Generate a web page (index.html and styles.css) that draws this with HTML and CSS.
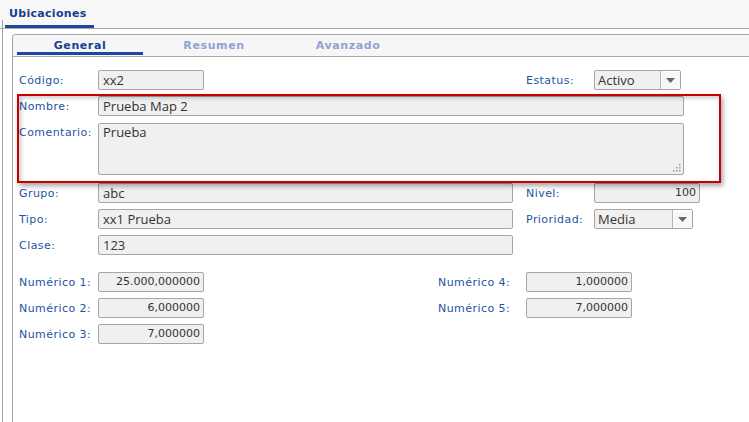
FILE: index.html
```html
<!DOCTYPE html>
<html lang="es">
<head>
<meta charset="utf-8">
<title>Ubicaciones</title>
<link rel="stylesheet" href="styles.css">
</head>
<body>
<div class="header">
  <div class="main-tab">Ubicaciones</div>
</div>
<div class="outer">
  <div class="panel">
    <div class="tabs">
      <div class="tab active">General</div>
      <div class="tab">Resumen</div>
      <div class="tab">Avanzado</div>
    </div>
    <div class="form">
      <div class="grid">
        <div class="lbl">Código:</div>
        <div class="fld w-short">xx2</div>
        <div class="lbl lbl2">Estatus:</div>
        <div class="sel w-estatus"><span class="sel-text">Activo</span><span class="sel-btn"><svg width="9" height="5" viewBox="0 0 9 5"><path d="M0 0H9L4.5 5Z" fill="#666"/></svg></span></div>

        <div class="lbl">Nombre:</div>
        <div class="fld span-wide">Prueba Map 2</div>

        <div class="lbl lbl-top">Comentario:</div>
        <div class="fld area span-wide">Prueba<svg class="grip" width="9" height="9" viewBox="0 0 9 9"><g fill="#9a9a9a"><rect x="7" y="1" width="1.5" height="1.5"/><rect x="4" y="4" width="1.5" height="1.5"/><rect x="7" y="4" width="1.5" height="1.5"/><rect x="1" y="7" width="1.5" height="1.5"/><rect x="4" y="7" width="1.5" height="1.5"/><rect x="7" y="7" width="1.5" height="1.5"/></g></svg></div>

        <div class="lbl">Grupo:</div>
        <div class="fld">abc</div>
        <div class="lbl lbl2">Nivel:</div>
        <div class="fld num w-short">100</div>

        <div class="lbl">Tipo:</div>
        <div class="fld">xx1 Prueba</div>
        <div class="lbl lbl2">Prioridad:</div>
        <div class="sel w-prio"><span class="sel-text">Media</span><span class="sel-btn"><svg width="9" height="5" viewBox="0 0 9 5"><path d="M0 0H9L4.5 5Z" fill="#666"/></svg></span></div>

        <div class="lbl">Clase:</div>
        <div class="fld">123</div>
      </div>

      <div class="numgrid">
        <div class="lbl">Numérico 1:</div>
        <div class="fld num">25.000,000000</div>
        <div class="spacer"></div>
        <div class="lbl">Numérico 4:</div>
        <div class="fld num">1,000000</div>

        <div class="lbl">Numérico 2:</div>
        <div class="fld num">6,000000</div>
        <div class="spacer"></div>
        <div class="lbl">Numérico 5:</div>
        <div class="fld num">7,000000</div>

        <div class="lbl">Numérico 3:</div>
        <div class="fld num">7,000000</div>
      </div>

      <div class="highlight"></div>
    </div>
  </div>
</div>
</body>
</html>
```

FILE: styles.css
```css
html, body {
  margin: 0;
  padding: 0;
  background: #ffffff;
  overflow: hidden;
  height: 100%;
}

body {
  font-family: "DejaVu Sans", Verdana, sans-serif;
  font-size: 11px;
  color: #333;
}

.header {
  height: 28px;
  border-bottom: 1px solid #a9a9a9;
  background: linear-gradient(#a4a4a4, #a4a4a4) 2px 20px / 1px 8px no-repeat, #f7f7f7;
  display: flex;
  align-items: flex-end;
}

.main-tab {
  margin-left: 5px;
  width: 85px;
  padding-left: 4px;
  padding-bottom: 5px;
  line-height: 13px;
  border-bottom: 3px solid #1b47a0;
  font-weight: bold;
  font-size: 11px;
  letter-spacing: 0.3px;
  color: #173f8f;
}

.outer {
  margin-left: 2px;
  border-left: 1px solid #a4a4a4;
  padding: 5px 0 0 9px;
  height: calc(100% - 34px);
}

.panel {
  height: 100%;
  border-left: 1px solid #a4a4a4;
  border-top: 1px solid #a4a4a4;
  border-top-left-radius: 4px;
}

.tabs {
  height: 21px;
  background: #f6f6f6;
  border-bottom: 1px solid #a9a9a9;
  display: flex;
  border-top-left-radius: 3px;
}

.tab {
  width: 134px;
  box-sizing: border-box;
  text-align: center;
  font-weight: bold;
  font-size: 11px;
  letter-spacing: 0.6px;
  color: #8ea3d3;
  line-height: 17px;
  padding-top: 2px;
}

.tab.active {
  color: #173f8f;
  margin: 0 4px 0 4px;
  width: 126px;
  height: 20px;
  border-bottom: 3px solid #1b47a0;
}

.form {
  position: relative;
  padding: 13px 0 0 6px;
}

.lbl {
  color: #2453a3;
  font-size: 11px;
  letter-spacing: 0.45px;
  white-space: nowrap;
  align-self: center;
}

.lbl-top {
  align-self: start;
  padding-top: 3px;
  margin-top: 1px;
}

.grid {
  display: grid;
  grid-template-columns: 79px 415px 81px 120px;
  grid-template-rows: 20px 20px 55px 20px 20px 20px;
  row-gap: 6px;
}

.grid .lbl2 {
  grid-column: 3;
  margin-left: 13px;
}

.fld {
  box-sizing: border-box;
  height: 20px;
  border: 1px solid #a6a6a6;
  border-radius: 2px;
  background: #f0f0f0;
  font-family: "Open Sans", "DejaVu Sans", sans-serif;
  font-size: 13px;
  line-height: 18px;
  color: #333;
  padding: 0 4px;
  white-space: nowrap;
  overflow: hidden;
}

.grid .fld {
  grid-column: 2;
}

.grid .fld.num.w-short {
  grid-column: 4;
}

.w-short {
  width: 106px;
}

.grid .span-wide {
  grid-column: 2 / span 3;
  width: 586px;
}

.area {
  height: 52px;
  position: relative;
  line-height: 16px;
  padding-top: 0;
  margin-top: 1px;
  align-self: start;
}

.grip {
  position: absolute;
  right: 2px;
  bottom: 2px;
}

.num {
  text-align: right;
  font-family: "DejaVu Sans", Verdana, sans-serif;
  font-size: 11px;
  padding: 0 3px;
}

.sel {
  grid-column: 4;
  box-sizing: border-box;
  height: 20px;
  border: 1px solid #a6a6a6;
  border-radius: 2px;
  background: #f0f0f0;
  display: flex;
  align-items: stretch;
  font-family: "Open Sans", "DejaVu Sans", sans-serif;
  font-size: 13px;
  color: #333;
}

.w-estatus { width: 87px; }
.w-prio { width: 99px; }

.sel-text {
  flex: 1;
  line-height: 18px;
  padding-left: 3px;
}

.sel-btn {
  width: 19px;
  border-left: 1px solid #b4b4b4;
  background: #f7f7f7;
  box-shadow: inset 1px 1px 0 #ffffff;
  display: flex;
  align-items: center;
  justify-content: center;
}

.numgrid {
  margin-top: 17px;
  display: grid;
  grid-template-columns: 79px 106px 234px 88px 106px;
  row-gap: 6px;
  grid-auto-rows: 20px;
}

.spacer {
  height: 20px;
}

.highlight {
  position: absolute;
  left: 4px;
  top: 37px;
  width: 704px;
  height: 89px;
  box-sizing: border-box;
  border: 2px solid #c40000;
  box-shadow: 2px 3px 5px rgba(0, 0, 0, 0.35), inset 2px 2px 4px rgba(0, 0, 0, 0.22);
  pointer-events: none;
}
```
